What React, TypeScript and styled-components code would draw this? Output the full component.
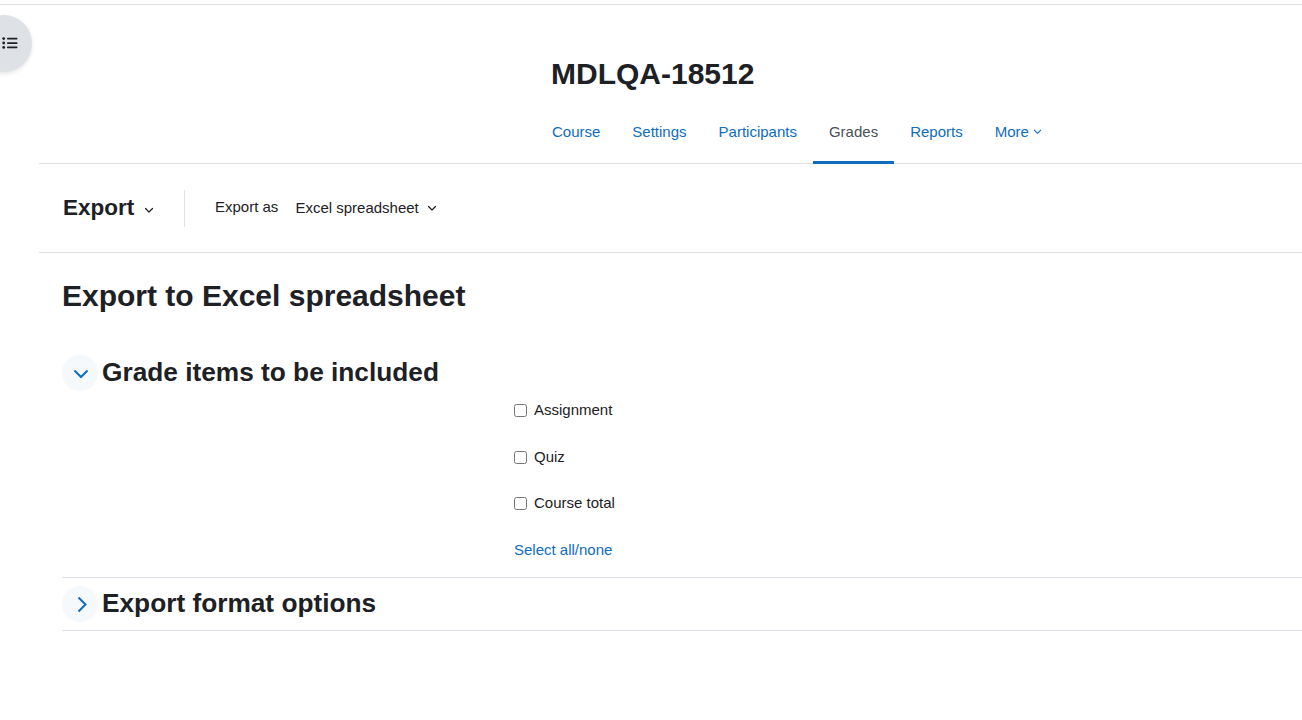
import React from "react";
import styled, { createGlobalStyle } from "styled-components";

const Global = createGlobalStyle`
  html, body { margin: 0; padding: 0; background: #fff; overflow: hidden; }
  body { font-family: "Liberation Sans", Arial, sans-serif; font-size: 15px; color: #1d2125; }
  * { box-sizing: border-box; }
`;
const Page = styled.div`position: relative; width: 1302px; height: 720px; overflow: hidden;`;
const TopRule = styled.div`height: 5px; border-bottom: 1px solid #dee2e6;`;
const DrawerToggle = styled.button`
  position: absolute; left: -25px; top: 15px; width: 57px; height: 57px; border: 0; border-radius: 50%;
  background: #dee2e6; box-shadow: 0 2px 4px rgba(0,0,0,.1); padding: 0 0 2px 27px; display: flex; align-items: center;
  svg { display: block; }
`;
const Main = styled.main`margin-left: 39px;`;
const Header = styled.header`height: 159px; border-bottom: 1px solid #dee2e6; padding-left: 497px; display: flex; flex-direction: column;`;
const CourseTitle = styled.h1`margin: 52px 0 0 15px; font-size: 30px; line-height: 34px; font-weight: 700; height: 34px;`;
const Tabs = styled.nav`display: flex; margin-top: 20px;`;
const Tab = styled.a<{ $active?: boolean }>`
  height: 53px; padding: 0 16px 10px; display: flex; align-items: center; gap: 4px;
  font-size: 15px; color: ${p => p.$active ? "#495057" : "#0f6cbf"};
  border-bottom: 3px solid ${p => p.$active ? "#0f6cbf" : "transparent"};
`;
const Tertiary = styled.div`height: 89px; border-bottom: 1px solid #dee2e6; display: flex; align-items: center; padding: 0 0 0 24px;`;
const ActionTitle = styled.div`display: flex; align-items: center; gap: 10px; font-size: 22.5px; font-weight: 700; width: 122px; height: 37px; border-right: 1px solid #dee2e6; svg { margin-top: 4px; }`;
const ExportAs = styled.span`font-size: 15px; margin-left: 30px; margin-top: -4px;`;
const Select = styled.div`display: flex; align-items: center; gap: 8px; font-size: 15px; margin: -1px 0 0 17px;`;
const Content = styled.div`padding-left: 23px;`;
const PageHeading = styled.h2`margin: 24px 0 0; font-size: 30px; line-height: 38px; font-weight: 700;`;
const Section = styled.section`border-bottom: 1px solid #dee2e6;`;
const SectionHead = styled.div<{ $first?: boolean }>`display: flex; align-items: center; gap: 4px; height: 36px; margin-top: ${p => p.$first ? "40px" : "8px"}; margin-bottom: ${p => p.$first ? "0" : "8px"};`;
const Round = styled.span`width: 36px; height: 36px; border-radius: 50%; background: #f5f9fc; color: #0f6cbf; display: flex; align-items: center; justify-content: center;`;
const SectionTitle = styled.h3`margin: -2px 0 0; font-size: 26.25px; line-height: 34px; font-weight: 700;`;
const Fields = styled.div`padding: 7.5px 0 16px 452px; display: flex; flex-direction: column;`;
const Check = styled.label`display: flex; align-items: center; gap: 7px; height: 22px; margin-bottom: 24.67px; font-size: 15px;`;
const Box = styled.input`width: 13px; height: 13px; margin: 2px 0 0; accent-color: #0f6cbf;`;
const SelectAll = styled.a`font-size: 15px; line-height: 22px; margin-top: 1px; color: #0f6cbf;`;

const Chevron = ({ size = 10, sw = 1.2 }: { size?: number; sw?: number }) => (
  <svg width={size} height={size} viewBox="0 0 10 10" fill="none" stroke="currentColor" strokeWidth={sw} strokeLinecap="round" strokeLinejoin="round">
    <path d="M1.5 3.5 5 7l3.5-3.5" />
  </svg>
);
const ListIcon = () => (
  <svg width="16" height="12" viewBox="0 0 16 12" fill="#1d2125">
    <circle cx="1.7" cy="1.6" r="1.4" /><circle cx="1.7" cy="6" r="1.4" /><circle cx="1.7" cy="10.4" r="1.4" />
    <rect x="5" y="0.8" width="10.5" height="1.7" rx=".7" /><rect x="5" y="5.2" width="10.5" height="1.7" rx=".7" /><rect x="5" y="9.6" width="10.5" height="1.7" rx=".7" />
  </svg>
);
const BigIcon = styled.svg`margin: 1px 0 0 2px;`;

export default function App() {
  return (
    <Page>
      <Global />
      <TopRule />
      <DrawerToggle aria-label="Open course index"><ListIcon /></DrawerToggle>
      <Main>
        <Header>
          <CourseTitle>MDLQA-18512</CourseTitle>
          <Tabs>
            <Tab>Course</Tab><Tab>Settings</Tab><Tab>Participants</Tab><Tab $active>Grades</Tab><Tab>Reports</Tab>
            <Tab>More <Chevron size={9} /></Tab>
          </Tabs>
        </Header>
        <Tertiary>
          <ActionTitle>Export <Chevron /></ActionTitle>
          <ExportAs>Export as</ExportAs>
          <Select>Excel spreadsheet <Chevron /></Select>
        </Tertiary>
        <Content>
          <PageHeading>Export to Excel spreadsheet</PageHeading>
          <SectionHead $first>
            <Round><BigIcon width="16" height="16" viewBox="0 0 16 16" fill="none" stroke="currentColor" strokeWidth="2"><path d="M1.5 4.5 8 11l6.5-6.5" /></BigIcon></Round>
            <SectionTitle>Grade items to be included</SectionTitle>
          </SectionHead>
          <Section>
            <Fields>
              <Check><Box type="checkbox" />Assignment</Check>
              <Check><Box type="checkbox" />Quiz</Check>
              <Check><Box type="checkbox" />Course total</Check>
              <SelectAll>Select all/none</SelectAll>
            </Fields>
          </Section>
          <Section>
            <SectionHead>
              <Round><BigIcon width="16" height="16" viewBox="0 0 16 16" fill="none" stroke="currentColor" strokeWidth="2"><path d="M5.5 .5l7 7-7 7" /></BigIcon></Round>
              <SectionTitle>Export format options</SectionTitle>
            </SectionHead>
          </Section>
        </Content>
      </Main>
    </Page>
  );
}
